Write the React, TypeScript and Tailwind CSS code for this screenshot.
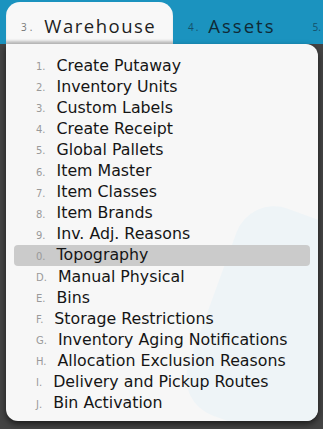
import React from "react";

type MenuItem = { key: string; label: string };

const items: MenuItem[] = [
    { key: "1.", label: "Create Putaway" },
    { key: "2.", label: "Inventory Units" },
    { key: "3.", label: "Custom Labels" },
    { key: "4.", label: "Create Receipt" },
    { key: "5.", label: "Global Pallets" },
    { key: "6.", label: "Item Master" },
    { key: "7.", label: "Item Classes" },
    { key: "8.", label: "Item Brands" },
    { key: "9.", label: "Inv. Adj. Reasons" },
    { key: "0.", label: "Topography" },
    { key: "D.", label: "Manual Physical" },
    { key: "E.", label: "Bins" },
    { key: "F.", label: "Storage Restrictions" },
    { key: "G.", label: "Inventory Aging Notifications" },
    { key: "H.", label: "Allocation Exclusion Reasons" },
    { key: "I.", label: "Delivery and Pickup Routes" },
    { key: "J.", label: "Bin Activation" },
];

export default function App() {
    const active = "0.";

    return (
        <div className="w-[323px] h-[429px] bg-[#3b3b3b] overflow-hidden flex flex-col">
            {/* tab strip */}
            <div className="h-[44px] shrink-0 bg-[#1b93bf] flex items-end font-['Open_Sans',sans-serif]">
                <div className="ml-[6px] w-[167px] h-[42px] bg-[#f8f8f8] rounded-t-[14px] flex items-center pl-[15px] pt-[5px] gap-[9px] shadow-[inset_0_-4px_3px_-1px_rgba(0,0,0,0.2)]">
                    <span className="text-[10px] text-[#777] tracking-[3px] translate-y-[2px]">3.</span>
                    <span className="text-[18.5px] text-[#1e1e1e] tracking-[1.5px]">Warehouse</span>
                </div>
                <div className="flex items-center h-[42px] pt-[5px] pl-[15px] gap-[8px]">
                    <span className="text-[10px] text-[#14506a] tracking-[2px] translate-y-[2px]">4.</span>
                    <span className="text-[18.5px] text-[#102a36] tracking-[2px]">Assets</span>
                </div>
                <div className="flex items-center h-[42px] pt-[5px] pl-[37px]">
                    <span className="text-[10px] text-[#14506a] translate-y-[2px]">5.</span>
                </div>
            </div>

            {/* dropdown panel */}
            <div className="flex-1 flex bg-[#444]">
                <div className="ml-[6px] w-[312px] h-[377px] bg-[#f7f7f7] rounded-b-[12px] rounded-tr-[12px] shadow-[0_3px_6px_rgba(0,0,0,0.6)] pt-[11px] px-[8px] font-['DejaVu_Sans',Verdana,sans-serif] relative overflow-hidden">
                    <div className="absolute right-[-40px] top-[170px] w-[150px] h-[220px] rounded-[40px] bg-[#eef4f7] rotate-[20deg]" />
                    <ul className="relative flex flex-col">
                        {items.map(item => (
                            <li
                                key={item.key}
                                className={
                                    item.key === active
                                        ? "h-[21.1px] flex items-center pl-[22px] rounded-[4px] bg-[#cbcbcb]"
                                        : "h-[21.1px] flex items-center pl-[22px]"
                                }
                            >
                                <span className="text-[10px] text-[#9a9a9a] mr-[11px] translate-y-[1px]">{item.key}</span>
                                <span className="text-[15.8px] text-[#151515] leading-none">{item.label}</span>
                            </li>
                        ))}
                    </ul>
                </div>
            </div>
        </div>
    )
}
